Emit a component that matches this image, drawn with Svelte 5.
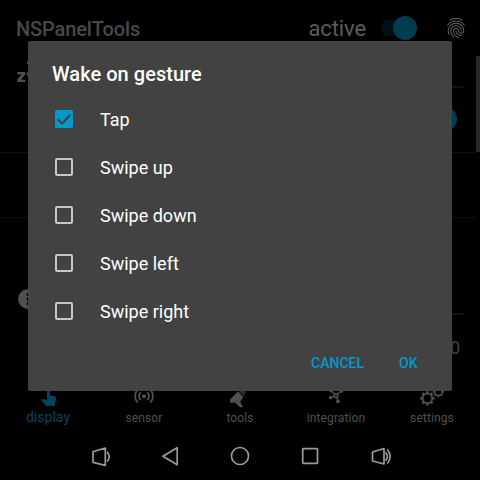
<script>
  const options = $state([
    { label: 'Tap', checked: true },
    { label: 'Swipe up', checked: false },
    { label: 'Swipe down', checked: false },
    { label: 'Swipe left', checked: false },
    { label: 'Swipe right', checked: false }
  ]);
  const tabs = ['display', 'sensor', 'tools', 'integration', 'settings'];
  const teeth = [0, 45, 90, 135, 180, 225, 270, 315];
</script>

{#snippet gear(x, y, s)}
  <g transform="translate({x} {y}) scale({s})">
    <circle r="5" fill="none" stroke="currentColor" stroke-width="2" />
    {#each teeth as a}
      <rect x="-1.3" y="-7.4" width="2.6" height="2.2" transform="rotate({a})" />
    {/each}
  </g>
{/snippet}

<div class="screen">
  <header>
    <h1>NSPanelTools</h1>
    <span class="active">active</span>
    <span class="switch"><i></i></span>
    <svg class="finger" viewBox="0 0 24 24"><path d="M17.81 4.47c-.08 0-.16-.02-.23-.06C15.66 3.42 14 3 12.01 3c-1.98 0-3.86.47-5.57 1.41-.24.13-.54.04-.68-.2-.13-.24-.04-.55.2-.68C7.82 2.52 9.86 2 12.01 2c2.13 0 3.99.47 6.03 1.52.25.13.34.43.21.67-.09.18-.26.28-.44.28zM3.5 9.72c-.1 0-.2-.03-.29-.09-.23-.16-.28-.47-.12-.7.99-1.4 2.25-2.5 3.75-3.27C9.98 4.04 14 4.03 17.15 5.65c1.5.77 2.76 1.86 3.75 3.25.16.22.11.54-.12.7-.23.16-.54.11-.7-.12-.9-1.26-2.04-2.25-3.39-2.94-2.87-1.47-6.54-1.47-9.4.01-1.36.7-2.5 1.7-3.4 2.96-.08.14-.23.21-.39.21zm6.25 12.07c-.13 0-.26-.05-.35-.15-.87-.87-1.34-1.43-2.01-2.64-.69-1.23-1.05-2.73-1.05-4.34 0-2.97 2.54-5.39 5.66-5.39s5.66 2.42 5.66 5.39c0 .28-.22.5-.5.5s-.5-.22-.5-.5c0-2.42-2.09-4.39-4.66-4.39-2.57 0-4.66 1.97-4.66 4.39 0 1.44.32 2.77.93 3.85.64 1.15 1.08 1.64 1.85 2.42.19.2.19.51 0 .71-.11.1-.24.15-.37.15zm7.17-1.85c-1.19 0-2.24-.3-3.1-.89-1.49-1.01-2.38-2.65-2.38-4.39 0-.28.22-.5.5-.5s.5.22.5.5c0 1.41.72 2.74 1.94 3.56.71.48 1.54.71 2.54.71.24 0 .64-.03 1.04-.1.27-.05.53.13.58.41.05.27-.13.53-.41.58-.57.11-1.07.12-1.21.12zM14.91 22c-.04 0-.09-.01-.13-.02-1.59-.44-2.63-1.03-3.72-2.1-1.4-1.39-2.17-3.24-2.17-5.22 0-1.62 1.38-2.94 3.08-2.94 1.7 0 3.08 1.32 3.08 2.94 0 1.07.93 1.94 2.08 1.94s2.08-.87 2.08-1.94c0-3.77-3.25-6.83-7.25-6.83-2.84 0-5.44 1.58-6.61 4.03-.39.81-.59 1.76-.59 2.8 0 .78.07 2.01.67 3.61.1.26-.03.55-.29.64-.26.1-.55-.04-.64-.29-.49-1.31-.73-2.61-.73-3.96 0-1.2.23-2.29.68-3.24 1.33-2.79 4.28-4.6 7.51-4.6 4.55 0 8.25 3.51 8.25 7.83 0 1.62-1.38 2.94-3.08 2.94s-3.08-1.32-3.08-2.94c0-1.07-.93-1.94-2.08-1.94s-2.08.87-2.08 1.94c0 1.71.66 3.31 1.87 4.51.95.94 1.86 1.46 3.27 1.85.27.07.42.35.35.61-.05.23-.26.38-.47.38z" /></svg>
  </header>

  <main>
    <div class="prefs">
      <section class="sleep">
        <svg class="zzz" viewBox="0 0 24 24"><path d="M1.300 12h8v2.300L5 19.700h4.300V22h-8v-2.300l4.200-5.400H1.300zM10.700 12.500h3v3h-3zM11 1.500h4v2.400h-4z" /></svg>
        <div class="controls"><hr /><span class="knob"></span></div>
      </section>
      <section class="gesture"></section>
      <section class="dim">
        <svg class="dots" viewBox="0 0 20 20"><circle cx="10" cy="10" r="10" /><path d="M8.800 4h3v3h-3zM8.800 8.500h3v3h-3zM8.800 13h3v3h-3z" fill="#000" /></svg>
        <div class="controls"><hr /><span class="value">0</span></div>
      </section>
    </div>
    <div class="scroll"><i></i></div>
  </main>

  <nav class="tabs">
    {#each tabs as tab, i}
      <div class="tab" class:selected={i === 0}>
        <svg viewBox="0 0 24 24">
          {#if i === 0}
            <path d="M11 3.500a1.500 1.500 0 0 1 3 0V10.500l5 1c.8.200 1.200.700 1.100 1.500L18.600 21H10l-5-6 1-1.300 5 1.300z" />
          {:else if i === 1}
            <g fill="none" stroke="currentColor" stroke-width="1.800"><path d="M5.700 4.700a9.200 9.200 0 0 0 0 13M18.300 4.700a9.200 9.200 0 0 1 0 13M8.700 7.400a5.400 5.400 0 0 0 0 7.600M15.300 7.400a5.400 5.400 0 0 1 0 7.600" /></g><circle cx="12" cy="11.200" r="2" />
          {:else if i === 2}
            <path d="M10.300 6.500L2.500 14 2 17.700l5-.2 5.300 4.900 2.700-.7-3-5 3.300-4.200z" /><path d="M11 6l3-3 4 5-2.700 3.800z" opacity=".55" /><path d="M15.500 2.500l2.500-.5-.5 5z" />
          {:else if i === 3}
            <g stroke="currentColor" stroke-width="1.300"><path d="M12 10.700l-5.300 2M12 10.700l2 5.300M12 10.700l5-4.700M12 10.700L7.500 6" /></g><circle cx="12" cy="10.700" r="2.600" /><circle cx="12" cy="10.700" r="1" fill="#000" /><circle cx="6.500" cy="12.800" r="1.700" /><circle cx="14" cy="16.300" r="1.900" /><circle cx="17.500" cy="5.800" r="1.900" /><circle cx="7" cy="5.500" r="1.900" />
          {:else}
            {@render gear(7.4, 13.3, 0.97)}
            {@render gear(18.4, 6.7, 0.75)}
          {/if}
        </svg>
        <span>{tab}</span>
      </div>
    {/each}
  </nav>

  <nav class="system">
    <svg viewBox="0 0 24 24"><path d="M5 7.800v10.500l12.300 3V4zM19 7.800c2.900 3 2.900 7 0 9.700" /></svg>
    <svg viewBox="0 0 24 24"><path d="M19.200 3.700v17L4.900 12.200z" /></svg>
    <svg viewBox="0 0 24 24"><circle cx="12" cy="12" r="8.500" /></svg>
    <svg viewBox="0 0 24 24"><rect x="4.700" y="4.700" width="14.800" height="14.600" rx=".5" /></svg>
    <svg viewBox="0 0 24 24"><path d="M4.500 8v9l11.500 3V4.500zM17.500 8.300c2.400 2.500 2.400 5.800 0 8.300M19.200 5.500c4 4.200 4 9.800 0 14" /></svg>
  </nav>

  <div class="dialog" role="dialog" aria-label="Wake on gesture">
    <h2>Wake on gesture</h2>
    <div class="options">
      {#each options as option}
        <button class="option" role="checkbox" aria-checked={option.checked} onclick={() => (option.checked = !option.checked)}>
          <svg viewBox="0 0 24 24">
            {#if option.checked}
              <rect x="3" y="3" width="18" height="18" rx="1.500" fill="#0099cc" /><path d="M5.700 12.200l4.400 4.300 8.300-8.700" fill="none" stroke="#424242" stroke-width="2.200" />
            {:else}
              <rect x="4" y="4" width="16" height="16" rx="1" fill="none" stroke="#c6c6c6" stroke-width="2" />
            {/if}
          </svg>
          <span>{option.label}</span>
        </button>
      {/each}
    </div>
    <div class="actions"><button>CANCEL</button><button>OK</button></div>
  </div>
</div>

<style>
  :global(body) { margin: 0; background: #000; }
  .screen { position: relative; width: 480px; height: 480px; overflow: hidden; display: flex; flex-direction: column; background: #000; color: #4f4f4f; font-family: Roboto, sans-serif; }
  svg { display: block; fill: currentColor; flex: none; }
  h1, h2 { margin: 0; font-weight: 500; font-size: 20px; }
  header { height: 56px; box-sizing: border-box; padding: 0 12px 0 16px; display: flex; align-items: center; }
  h1 { flex: 1; line-height: 24px; padding-top: 2px; color: #484848; letter-spacing: -.12px; }
  .active { font-size: 22px; line-height: 26px; padding-top: 2px; margin-right: 15px; color: #5c5c5c; letter-spacing: -.1px; }
  .switch { width: 36px; height: 16px; border-radius: 8px; background: #001116; display: flex; justify-content: flex-end; align-items: center; margin-right: 27px; }
  .switch i { width: 24px; height: 24px; border-radius: 50%; background: #003d51; }
  .finger { width: 24px; height: 24px; color: #606060; }
  main { flex: 1; min-height: 0; display: flex; }
  .prefs { flex: 1; display: flex; flex-direction: column; }
  section { box-sizing: border-box; display: flex; justify-content: space-between; border-bottom: 1px solid #101010; }
  .sleep { height: 97px; padding: 0 12px 0 16px; }
  .zzz { width: 24px; height: 24px; margin-top: 4px; }
  .controls { width: 100px; display: flex; flex-direction: column; align-items: flex-end; }
  hr { width: 100%; height: 2px; margin: 30px 0 0; border: 0; background: #101010; }
  .knob { width: 24px; height: 24px; border-radius: 50%; background: #003d51; margin: 19px 7px 0 0; }
  .gesture { height: 65px; }
  .dim { flex: 1; padding: 0 12px 0 18px; border: 0; }
  .dots { width: 20px; height: 20px; margin-top: 71px; }
  .dim hr { margin-top: 95px; }
  .value { font-size: 18px; line-height: 22px; margin: 22px 4px 0 0; color: #444; }
  .scroll { width: 4px; }
  .scroll i { display: block; height: 96px; background: #272727; }
  .tabs { height: 47px; display: flex; color: #505050; }
  .tab { flex: 1; display: flex; flex-direction: column; align-items: center; font-size: 12px; letter-spacing: .12px; line-height: 16px; }
  .tab svg { width: 24px; height: 24px; }
  .tab span { margin-top: 1px; }
  .selected { color: #00455d; font-size: 14px; letter-spacing: .02px; }
  .selected span { margin-top: 0; }
  .system { height: 48px; display: flex; justify-content: center; align-items: center; gap: 46px; color: #9b9b9b; }
  .system svg { width: 24px; height: 24px; fill: none; stroke: currentColor; stroke-width: 1.7; stroke-linejoin: round; }
  .dialog { position: absolute; left: 28px; top: 41px; width: 424px; height: 350px; box-sizing: border-box; border-radius: 2px; background: #424242; color: #fff; display: flex; flex-direction: column; }
  h2 { padding: 21px 24px 0; line-height: 24px; height: 33px; letter-spacing: .04px; }
  .options { display: flex; flex-direction: column; }
  button { font-family: inherit; background: none; border: 0; margin: 0; color: inherit; }
  .option { height: 48px; padding: 0 24px; display: flex; align-items: center; gap: 24px; font-size: 18px; text-align: left; }
  .option svg { width: 24px; height: 24px; }
  .actions { flex: 1; display: flex; justify-content: flex-end; align-items: center; padding: 0 26.5px 1px 0; gap: 19px; }
  .actions button { padding: 0 8px; color: #0099cc; font-size: 14px; font-weight: 500; }
</style>
